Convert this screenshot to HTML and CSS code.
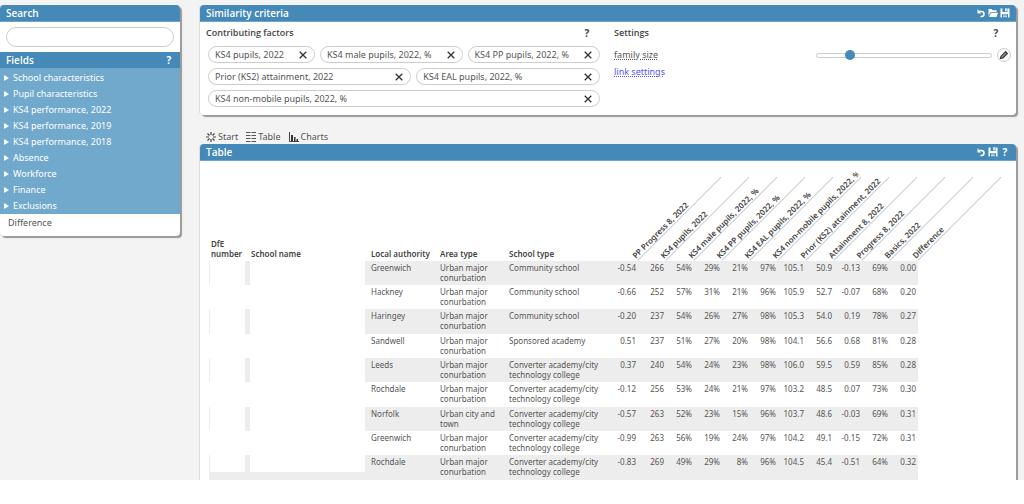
FILE: index.html
```html
<!DOCTYPE html>
<html lang="en">
<head>
    <meta charset="utf-8">
    <title>Similar schools</title>
    <link rel="stylesheet" href="styles.css">
</head>
<body>
    <!-- shared icons -->
    <svg class="defs" width="0" height="0">
        <symbol id="cross" viewBox="0 0 8 8"><path d="M.7.7l6.600 6.600M7.300.7L.7 7.300" fill="none" stroke="currentColor" stroke-width="1.300"/></symbol>
        <symbol id="undo" viewBox="0 0 10 10"><path d="M3 3.500h2.500a2.500 2.500 0 0 1 0 5h-1" fill="none" stroke="currentColor" stroke-width="1.500"/><path d="M1.500 1v4.500H5z" fill="currentColor"/></symbol>
        <symbol id="open" viewBox="0 0 10 10"><path d="M.5 8V1h3l1 1.200h4V4H2.500z" fill="currentColor"/><path d="M3 4.700h7L8.500 9H1z" fill="currentColor"/></symbol>
        <symbol id="save" viewBox="0 0 10 10"><path d="M.5.5h2v3.500h5V.5h2v9h-1.500V6h-6v3.500H.5z" fill="currentColor"/><path d="M5.500.5h1.200v2.500H5.500zM3 7h4M3 8.700h4" stroke="currentColor" stroke-width=".8" fill="none"/></symbol>
        <symbol id="pencil" viewBox="0 0 10 10"><path d="M1.500 8.500l.6-2.300L6.600 1.700l1.700 1.700-4.500 4.500z" fill="#999" stroke="currentColor" stroke-width="1.200"/></symbol>
    </svg>

    <div id="app">
        <aside class="sidebar panel">
            <h2 class="bar"><label for="search">Search</label></h2>
            <div class="search">
                <input type="text" id="search">
            </div>
            <h2 class="bar">Fields <button class="help">?</button></h2>
            <ul class="fields">
                <li><button>School characteristics</button></li>
                <li><button>Pupil characteristics</button></li>
                <li><button>KS4 performance, 2022</button></li>
                <li><button>KS4 performance, 2019</button></li>
                <li><button>KS4 performance, 2018</button></li>
                <li><button>Absence</button></li>
                <li><button>Workforce</button></li>
                <li><button>Finance</button></li>
                <li><button>Exclusions</button></li>
            </ul>
            <div class="field">Difference</div>
        </aside>

        <main>
            <section class="panel">
                <h2 class="bar">Similarity criteria
                    <span class="tools">
                        <button aria-label="Undo"><svg><use href="#undo"/></svg></button>
                        <button aria-label="Open"><svg><use href="#open"/></svg></button>
                        <button aria-label="Save"><svg><use href="#save"/></svg></button>
                    </span>
                </h2>
                <div class="criteria">
                    <div class="factors">
                        <h3>Contributing factors <button class="help">?</button></h3>
                        <div class="pills">
                            <span class="pill">KS4 pupils, 2022 <button aria-label="Remove"><svg><use href="#cross"/></svg></button></span>
                            <span class="pill">KS4 male pupils, 2022, % <button aria-label="Remove"><svg><use href="#cross"/></svg></button></span>
                            <span class="pill">KS4 PP pupils, 2022, % <button aria-label="Remove"><svg><use href="#cross"/></svg></button></span>
                            <span class="pill">Prior (KS2) attainment, 2022 <button aria-label="Remove"><svg><use href="#cross"/></svg></button></span>
                            <span class="pill">KS4 EAL pupils, 2022, % <button aria-label="Remove"><svg><use href="#cross"/></svg></button></span>
                            <span class="pill">KS4 non-mobile pupils, 2022, % <button aria-label="Remove"><svg><use href="#cross"/></svg></button></span>
                        </div>
                    </div>
                    <div class="settings">
                        <h3>Settings <button class="help">?</button></h3>
                        <div class="setting">
                            <label for="size">family size</label>
                            <input type="range" id="size" min="0" max="100" value="17">
                            <button class="edit" aria-label="Edit"><svg><use href="#pencil"/></svg></button>
                        </div>
                        <a href="#">link settings</a>
                    </div>
                </div>
            </section>

            <nav>
                <a href="#">
                    <svg viewBox="0 0 10 10"><path d="M5 0v3M5 7v3M0 5h3M7 5h3M1.500 1.500l2 2M6.500 6.500l2 2M8.500 1.500l-2 2M3.500 6.500l-2 2" stroke="#444" stroke-width="1.200"/></svg>
                    Start
                </a>
                <a href="#">
                    <svg viewBox="0 0 10 10"><path d="M0 .5h4.500M5.500.5H10M0 3.500h4.500M5.500 3.500H10M0 6.500h4.500M5.500 6.500H10M0 9.500h4.500M5.500 9.500H10" stroke="#555"/></svg>
                    Table
                </a>
                <a href="#">
                    <svg viewBox="0 0 10 10"><path d="M.5 0v9.500H10" fill="none" stroke="#444"/><path d="M2 3h2v6H2zM5 5h1.500v4H5zM7.500 7H9v2H7.500z" fill="#333"/></svg>
                    Charts
                </a>
            </nav>

            <section class="panel results">
                <h2 class="bar">Table
                    <span class="tools">
                        <button aria-label="Undo"><svg><use href="#undo"/></svg></button>
                        <button aria-label="Save"><svg><use href="#save"/></svg></button>
                        <button class="help">?</button>
                    </span>
                </h2>
                <table>
                    <colgroup>
                        <col class="number">
                        <col class="name">
                        <col class="area" span="2">
                        <col class="type">
                        <col class="value" span="11">
                    </colgroup>
                    <thead>
                        <tr>
                            <th>DfE number</th>
                            <th>School name</th>
                            <th>Local authority</th>
                            <th>Area type</th>
                            <th>School type</th>
                            <th><div class="slant">PP Progress 8, 2022</div></th>
                            <th><div class="slant">KS4 pupils, 2022</div></th>
                            <th><div class="slant">KS4 male pupils, 2022, %</div></th>
                            <th><div class="slant">KS4 PP pupils, 2022, %</div></th>
                            <th><div class="slant">KS4 EAL pupils, 2022, %</div></th>
                            <th><div class="slant">KS4 non-mobile pupils, 2022, %</div></th>
                            <th><div class="slant">Prior (KS2) attainment, 2022</div></th>
                            <th><div class="slant">Attainment 8, 2022</div></th>
                            <th><div class="slant">Progress 8, 2022</div></th>
                            <th><div class="slant">Basics, 2022</div></th>
                            <th><div class="slant">Difference</div></th>
                        </tr>
                    </thead>
                    <tbody id="rows"></tbody>
                </table>
            </section>
        </main>
    </div>

    <script>
        const urban = 'Urban major conurbation';
        const converter = 'Converter academy/city technology college';
        const schools = [
            ['Greenwich', urban, 'Community school', '-0.54', '266', '54%', '29%', '21%', '97%', '105.1', '50.9', '-0.13', '69%', '0.00'],
            ['Hackney', urban, 'Community school', '-0.66', '252', '57%', '31%', '21%', '96%', '105.9', '52.7', '-0.07', '68%', '0.20'],
            ['Haringey', urban, 'Community school', '-0.20', '237', '54%', '26%', '27%', '98%', '105.3', '54.0', '0.19', '78%', '0.27'],
            ['Sandwell', urban, 'Sponsored academy', '0.51', '237', '51%', '27%', '20%', '98%', '104.1', '56.6', '0.68', '81%', '0.28'],
            ['Leeds', urban, converter, '0.37', '240', '54%', '24%', '23%', '98%', '106.0', '59.5', '0.59', '85%', '0.28'],
            ['Rochdale', urban, converter, '-0.12', '256', '53%', '24%', '21%', '97%', '103.2', '48.5', '0.07', '73%', '0.30'],
            ['Norfolk', 'Urban city and town', converter, '-0.57', '263', '52%', '23%', '15%', '96%', '103.7', '48.6', '-0.03', '69%', '0.31'],
            ['Greenwich', urban, converter, '-0.99', '263', '56%', '19%', '24%', '97%', '104.2', '49.1', '-0.15', '72%', '0.31'],
            ['Rochdale', urban, converter, '-0.83', '269', '49%', '29%', '8%', '96%', '104.5', '45.4', '-0.51', '64%', '0.32']
        ];

        const body = document.getElementById('rows');
        for (const school of schools) {
            const row = body.insertRow();
            // number and name are withheld
            for (let i = 0; i < 2; i++) {
                const blank = document.createElement('div');
                blank.className = 'blank';
                row.insertCell().appendChild(blank);
            }
            for (const value of school) {
                row.insertCell().textContent = value;
            }
        }
    </script>
</body>
</html>
```
FILE: styles.css
```css
* {
    box-sizing: border-box;
}

body {
    margin: 0;
    background: #fff;
    color: #555;
    font-family: "Noto Sans", "Open Sans", sans-serif;
    font-size: 9px;
    line-height: 16px;
}

h2, h3, ul {
    margin: 0;
    padding: 0;
    list-style: none;
}

button {
    margin: 0;
    padding: 0;
    border: none;
    background: none;
    color: inherit;
    font: inherit;
    cursor: pointer;
}

.defs {
    position: absolute;
}

#app {
    display: flex;
    align-items: flex-start;
    gap: 20px;
    padding: 5px 8px 0 0;
    background: #f3f3f3;
    overflow: hidden;
}

main {
    flex: 1;
}

.panel {
    background: #fff;
    border-radius: 4px;
    box-shadow: 2px 2px 1px #999, -1px 0 0 #ddd;
}

.bar {
    display: flex;
    justify-content: space-between;
    align-items: center;
    height: 17px;
    padding: 0 6px;
    background: #4489b7;
    border-bottom: 1px solid #6ba5ca;
    color: #fff;
    font-family: "Open Sans", "Noto Sans", sans-serif;
    font-size: 10px;
    font-weight: 600;
}

.panel > .bar:first-child {
    border-radius: 4px 4px 0 0;
}

.help {
    width: 10px;
    font-size: 10px;
    font-weight: 700;
}

.tools {
    display: flex;
    align-items: center;
    gap: 2px;
}

.tools svg {
    display: block;
    width: 10px;
    height: 10px;
}

/* sidebar */

.sidebar {
    width: 180px;
}

.search {
    padding: 5px 6px;
}

.search input {
    display: block;
    width: 100%;
    height: 20px;
    padding: 0 8px;
    border: 1px solid #ccc;
    border-radius: 10px;
    outline: none;
}

.fields {
    padding-top: 1px;
    background: #71a9cd;
    color: #fff;
}

.fields button {
    display: flex;
    align-items: center;
    gap: 4px;
    width: 100%;
    height: 16px;
    padding-left: 4px;
}

.fields button::before {
    content: "";
    border-left: 5px solid #fff;
    border-top: 3px solid transparent;
    border-bottom: 3px solid transparent;
}

.field {
    height: 22px;
    padding: 1px 8px;
}

/* criteria */

.criteria {
    display: flex;
    gap: 14px;
    height: 93px;
    padding: 3px 5px 0 6px;
}

h3 {
    display: flex;
    justify-content: space-between;
    height: 16px;
    margin-bottom: 5px;
    color: #444;
    font-family: "Open Sans", "Noto Sans", sans-serif;
    font-size: 9px;
    font-weight: 600;
}

.factors {
    width: 394px;
}

.factors .help {
    margin-right: 8px;
}

.settings {
    flex: 1;
}

.settings .help {
    margin-right: 10px;
}

.pills {
    display: flex;
    flex-wrap: wrap;
    gap: 5px;
    padding-left: 2px;
}

.pill {
    display: flex;
    flex: 1 0 auto;
    justify-content: space-between;
    align-items: center;
    gap: 8px;
    height: 17px;
    padding: 0 7px 0 6px;
    border: 1px solid #ccc;
    border-radius: 9px;
}

.pill svg {
    display: block;
    width: 8px;
    height: 8px;
    color: #333;
}

.setting {
    display: flex;
    align-items: center;
    height: 18px;
}

.setting label, .settings a {
    text-decoration: underline dotted;
}

.settings a {
    color: #55f;
}

#size {
    width: 176px;
    height: 12px;
    margin: 0 5px 0 auto;
    background: none;
    appearance: none;
}

#size::-webkit-slider-runnable-track {
    height: 5px;
    border: 1px solid #ccc;
    border-radius: 3px;
}

#size::-webkit-slider-thumb {
    width: 10px;
    height: 10px;
    margin-top: -4px;
    border-radius: 50%;
    background: #4489b7;
    appearance: none;
}

.edit {
    width: 14px;
    height: 14px;
    border: 1px solid #ccc;
    border-radius: 50%;
}

.edit svg {
    display: block;
    width: 10px;
    height: 10px;
    margin: 1px;
    color: #333;
}

nav {
    display: flex;
    gap: 8px;
    height: 29px;
    padding: 14px 6px 0;
}

nav a {
    display: flex;
    align-items: center;
    gap: 2px;
    height: 16px;
    color: #555;
    text-decoration: none;
}

nav svg {
    width: 10px;
    height: 10px;
}

/* table */

.results {
    border-radius: 4px 4px 0 0;
}

table {
    width: 709px;
    margin-left: 9px;
    border-collapse: collapse;
    table-layout: fixed;
    font-size: 8px;
    line-height: 10px;
}

.number {
    width: 40px;
}

.name {
    width: 120px;
}

.area {
    width: 69px;
}

.type {
    width: 103px;
}

.value {
    width: 28px;
}

th {
    position: relative;
    height: 100px;
    padding: 0 2px 2px;
    color: #444;
    font-weight: 600;
    text-align: left;
    vertical-align: bottom;
}

.slant {
    position: absolute;
    left: 100%;
    bottom: 0;
    width: 118px;
    overflow: hidden;
    border-bottom: 1px solid #ccc;
    white-space: nowrap;
    transform: rotate(-45deg);
    transform-origin: left bottom;
}

td {
    height: 24px;
    padding: 2px;
    vertical-align: top;
}

tr:nth-child(3n) td {
    height: 25px;
}

tbody tr:nth-child(odd) {
    background: #ededed;
}

td:nth-child(n+6) {
    text-align: right;
}

td:nth-child(-n+2) {
    padding: 0 4px 0 1px;
}

.blank {
    height: 24px;
    background: #fff;
}

tr:nth-child(3n) .blank {
    height: 25px;
}

tr:last-child .blank {
    height: 17px;
}
```
